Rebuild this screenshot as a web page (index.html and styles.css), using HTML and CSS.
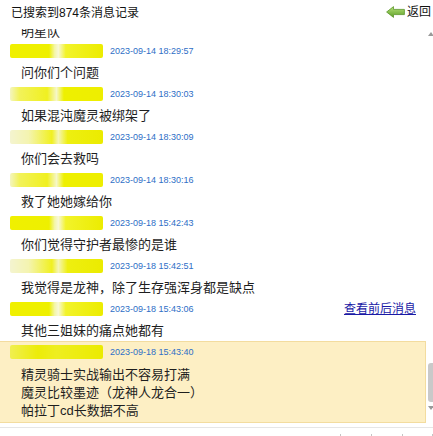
FILE: index.html
```html
<!DOCTYPE html>
<html lang="zh-CN">
<head>
<meta charset="utf-8">
<title>消息记录</title>
<link rel="stylesheet" href="styles.css">
</head>
<body>
<div class="page">
  <div class="header">
    <div class="title">已搜索到874条消息记录</div>
    <div class="back">
      <svg class="back-icon" width="19" height="12" viewBox="0 0 19 12">
        <defs>
          <linearGradient id="g" x1="0" y1="0" x2="0" y2="1">
            <stop offset="0" stop-color="#b6e27a"/>
            <stop offset="1" stop-color="#5e9f26"/>
          </linearGradient>
        </defs>
        <path d="M0.6 6 L7.5 0.6 V3.4 H18.4 V8.6 H7.5 V11.4 Z" fill="url(#g)" stroke="#5b962a" stroke-width="0.8" stroke-linejoin="round"/>
      </svg>
      <span class="back-text">返回</span>
    </div>
  </div>

  <div class="list">
    <div class="items">
      <div class="msg cut">明星队</div>

      <div class="entry">
        <div class="name-row"><span class="blob b1"></span><span class="time">2023-09-14 18:29:57</span></div>
        <div class="msg">问你们个问题</div>
      </div>
      <div class="entry">
        <div class="name-row"><span class="blob b2"></span><span class="time">2023-09-14 18:30:03</span></div>
        <div class="msg">如果混沌魔灵被绑架了</div>
      </div>
      <div class="entry">
        <div class="name-row"><span class="blob b3"></span><span class="time">2023-09-14 18:30:09</span></div>
        <div class="msg">你们会去救吗</div>
      </div>
      <div class="entry">
        <div class="name-row"><span class="blob b2"></span><span class="time">2023-09-14 18:30:16</span></div>
        <div class="msg">救了她她嫁给你</div>
      </div>
      <div class="entry">
        <div class="name-row"><span class="blob b1"></span><span class="time">2023-09-18 15:42:43</span></div>
        <div class="msg">你们觉得守护者最惨的是谁</div>
      </div>
      <div class="entry">
        <div class="name-row"><span class="blob b3"></span><span class="time">2023-09-18 15:42:51</span></div>
        <div class="msg">我觉得是龙神，除了生存强浑身都是缺点</div>
      </div>
      <div class="entry">
        <div class="name-row"><span class="blob b1"></span><span class="time">2023-09-18 15:43:06</span><a class="context-link" href="#">查看前后消息</a></div>
        <div class="msg">其他三姐妹的痛点她都有</div>
      </div>
      <div class="entry selected">
        <div class="name-row"><span class="blob b4"></span><span class="time">2023-09-18 15:43:40</span></div>
        <div class="msg-block">
          <div class="line">精灵骑士实战输出不容易打满</div>
          <div class="line">魔灵比较墨迹（龙神人龙合一）</div>
          <div class="line">帕拉丁cd长数据不高</div>
        </div>
      </div>
    </div>
    <div class="scrollbar">
      <div class="arrow-up"></div>
      <div class="thumb"></div>
      <div class="arrow-down"></div>
    </div>
  </div>

  <div class="footer">
    <span class="dot"></span><span class="dot"></span><span class="dot"></span><span class="dot"></span>
  </div>
</div>
</body>
</html>
```

FILE: styles.css
```css
html, body {
  margin: 0;
  padding: 0;
  background: #ffffff;
  overflow: hidden;
}

body {
  font-family: "Liberation Sans", "Noto Sans CJK SC", sans-serif;
  color: #1e1e1e;
  width: 433px;
  height: 436px;
}

.page {
  width: 433px;
  height: 436px;
  display: flex;
  flex-direction: column;
}

.header {
  height: 29px;
  flex: none;
  display: flex;
  justify-content: space-between;
  align-items: flex-start;
}

.title {
  margin: 6px 0 0 11px;
  font-size: 12px;
  line-height: 14px;
  color: #111;
}

.back {
  display: flex;
  align-items: center;
  margin: 5px 2px 0 0;
}

.back-icon {
  display: block;
  margin-right: 2px;
}

.back-text {
  font-size: 12px;
  line-height: 14px;
  color: #111;
}

.list {
  height: 398px;
  flex: none;
  display: flex;
  overflow: hidden;
}

.items {
  width: 427px;
  flex: none;
}

.msg {
  padding-left: 21px;
  font-size: 13px;
  line-height: 23px;
  height: 23px;
  color: #1e1e1e;
  white-space: nowrap;
}

.msg.cut {
  line-height: 18px;
  height: 18px;
  margin-top: -6px;
}

.name-row {
  height: 20px;
  display: flex;
  align-items: center;
}

.blob {
  width: 93px;
  height: 14px;
  margin-left: 10px;
  border-radius: 2px;
  filter: blur(0.4px);
}

.b1 {
  background: linear-gradient(90deg, #f0f000 0%, #eef000 42%, #f4f6a8 48%, #f8f8d8 52%, #f2f32a 60%, #ecec00 100%);
}
.b2 {
  background: linear-gradient(90deg, #f4f5c0 0%, #f2f25a 10%, #f0f020 40%, #f6f7c8 50%, #eef000 58%, #eeee00 100%);
}
.b3 {
  background: linear-gradient(90deg, #f4f4d0 0%, #f4f4b0 20%, #f0f020 45%, #f5f5b6 52%, #eeef10 62%, #ebeb00 100%);
}
.b4 {
  background: linear-gradient(90deg, #f0ef50 0%, #ecec08 30%, #eeee20 50%, #ebeb00 100%);
}

.time {
  margin-left: 7px;
  font-size: 9px;
  color: #2e6ec6;
  white-space: nowrap;
}

.context-link {
  margin-left: auto;
  margin-right: 11px;
  font-size: 12px;
  line-height: 14px;
  color: #1a1aa6;
  text-decoration: underline;
}

.entry.selected {
  background: #fdefc4;
  border-top: 1px solid #f3dc9f;
  border-bottom: 1px solid #f3dc9f;
  border-right: 1px solid #f3dc9f;
  margin-top: -1px;
  width: 425px;
}

.msg-block {
  padding: 4px 0 2px 21px;
  font-size: 13px;
}

.msg-block .line {
  line-height: 18px;
  height: 18px;
  white-space: nowrap;
}

.scrollbar {
  width: 8px;
  flex: none;
  display: flex;
  flex-direction: column;
  align-items: center;
}

.arrow-up {
  margin-top: 3px;
  width: 0;
  height: 0;
  border-left: 3px solid transparent;
  border-right: 3px solid transparent;
  border-bottom: 4px solid #9a9a9a;
}

.thumb {
  margin-top: 327px;
  width: 7px;
  height: 39px;
  background: #c9c9c9;
  border-radius: 3px;
}

.arrow-down {
  margin-top: 4px;
  width: 0;
  height: 0;
  border-left: 3px solid transparent;
  border-right: 3px solid transparent;
  border-top: 4px solid #9a9a9a;
}

.footer {
  border-top: 1px solid #e6e6e6;
  flex: 1;
  display: flex;
  align-items: flex-start;
  padding: 6px 0 0 340px;
  gap: 30px;
}

.dot {
  width: 2px;
  height: 2px;
  background: #c4c4c4;
}
```
